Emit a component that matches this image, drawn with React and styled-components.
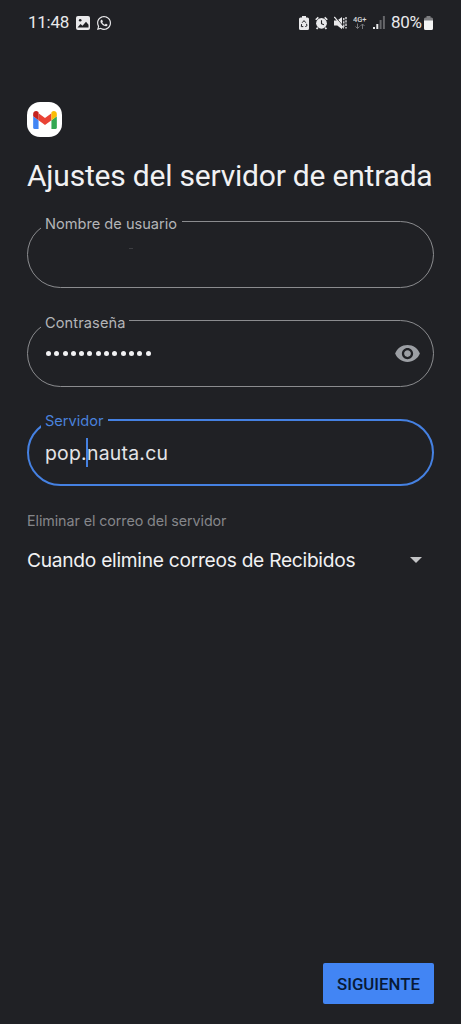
import React from 'react';
import styled, { createGlobalStyle } from 'styled-components';
import { FaWhatsapp } from 'react-icons/fa';
import { MdVisibility } from 'react-icons/md';

const GlobalStyle = createGlobalStyle`
  * {
    box-sizing: border-box;
  }
  body {
    margin: 0;
    background: #202125;
  }
`;

const Screen = styled.div`
  display: flex;
  flex-direction: column;
  width: 461px;
  height: 1024px;
  overflow: hidden;
  background: #202125;
  color: #f1f1f3;
  font-family: Roboto, sans-serif;
`;

const StatusBar = styled.header`
  display: flex;
  align-items: center;
  justify-content: space-between;
  height: 45px;
  padding: 0 28px;
  color: #e9e9eb;
`;

const StatusGroup = styled.div`
  display: flex;
  align-items: center;
  gap: ${({ $gap }) => $gap}px;
  svg {
    display: block;
    flex: none;
  }
`;

const Clock = styled.span`
  width: 42px;
  font-size: 17px;
  line-height: 20px;
  letter-spacing: -0.25px;
  white-space: nowrap;
  transform: translateY(-1px);
`;

const Percent = styled.span`
  width: 32px;
  font-size: 17px;
  line-height: 20px;
  letter-spacing: -0.35px;
  white-space: nowrap;
  transform: translateY(-1px);
`;

const Content = styled.main`
  display: flex;
  flex: 1;
  flex-direction: column;
  padding: 57px 27px 20px;
`;

const AppIcon = styled.div`
  display: flex;
  align-items: center;
  justify-content: center;
  width: 35px;
  height: 35px;
  border-radius: 13px;
  background: #fff;
`;

const Title = styled.h1`
  margin: 20px 0 26px;
  font-size: 30px;
  font-weight: 400;
  line-height: 38px;
  letter-spacing: -0.21px;
  white-space: nowrap;
`;

const Fields = styled.div`
  display: flex;
  flex-direction: column;
  gap: 32px;
`;

const Field = styled.div`
  position: relative;
  display: flex;
  align-items: center;
  justify-content: space-between;
  height: 67px;
  padding: 0 ${({ $active }) => ($active ? 11 : 12)}px 0 ${({ $active }) => ($active ? 16 : 17)}px;
  border: ${({ $active }) => ($active ? '2px solid #4581e2' : '1px solid #8b8c8f')};
  border-radius: 34px;
`;

const FieldLabel = styled.label`
  position: absolute;
  top: ${({ $active }) => ($active ? -9 : -7)}px;
  left: ${({ $active }) => ($active ? 12 : 13)}px;
  width: ${({ $width }) => $width}px;
  height: 18px;
  padding-left: 4px;
  background: #202125;
  color: ${({ $active }) => ($active ? '#4a82dc' : '#b4b5b8')};
  font-family: 'Google Sans', Inter, sans-serif;
  font-size: 14.6px;
  line-height: 18px;
  letter-spacing: ${({ $spacing }) => $spacing}px;
  white-space: nowrap;
`;

const Dots = styled.div`
  display: flex;
  gap: 3.3px;
  padding-left: 1px;
`;

const Dot = styled.i`
  width: 5px;
  height: 5px;
  border-radius: 50%;
  background: #f1f1f3;
`;

const Value = styled.span`
  display: flex;
  align-items: center;
  color: #e4e4e7;
  font-family: 'Google Sans', Inter, sans-serif;
  font-size: 19.4px;
  line-height: 26px;
  letter-spacing: 0.25px;
  white-space: nowrap;
`;

const Caret = styled.i`
  width: 2px;
  height: 29px;
  margin: 0 -1.5px 0 -0.5px;
  background: #4581e2;
`;

const Smudge = styled.i`
  width: 4px;
  height: 1px;
  margin: -13px 0 0 84px;
  background: #3d3e42;
`;

const SelectLabel = styled.p`
  margin: 26px 0 0;
  color: #85868a;
  font-family: 'Google Sans', Inter, sans-serif;
  font-size: 14.3px;
  line-height: 18px;
  letter-spacing: -0.08px;
`;

const Select = styled.div`
  display: flex;
  align-items: center;
  justify-content: space-between;
  height: 28px;
  margin-top: 16px;
  padding-right: 12px;
  font-family: 'Google Sans', Inter, sans-serif;
  font-size: 19.2px;
  letter-spacing: -0.28px;
  white-space: nowrap;
`;

const NextButton = styled.button`
  align-self: flex-end;
  width: 111px;
  height: 41px;
  margin-top: auto;
  padding: 1px 0 0;
  border: 0;
  border-radius: 2px;
  background: #4285f4;
  color: #081a36;
  font-family: Roboto, sans-serif;
  font-size: 16.8px;
  font-weight: 500;
`;

const ImageIcon = () => (
  <svg width="14" height="14" viewBox="0 0 14 14">
    <rect width="14" height="14" rx="2" fill="#e9e9eb" />
    <circle cx="4.2" cy="4.3" r="1.3" fill="#202125" />
    <path d="M1.5 11.5 4.5 8l2 1.8L10 5.8l2.5 3v2.7z" fill="#202125" />
  </svg>
);

const BatterySaverIcon = () => (
  <svg width="10" height="14" viewBox="0 0 10 14">
    <path d="M3 0h4v1.5h1.5A1.5 1.5 0 0 1 10 3v9.5A1.5 1.5 0 0 1 8.5 14h-7A1.5 1.5 0 0 1 0 12.5V3a1.5 1.5 0 0 1 1.5-1.5H3z" fill="#e9e9eb" />
    <path d="M3.2 6.7 5 4.6l1.8 2.1M7.5 7.8l.5 1.9-1.7.9M4.300 10.6H2.3l.3-2.5" fill="none" stroke="#202125" />
  </svg>
);

const AlarmIcon = () => (
  <svg width="13" height="14" viewBox="0 0 14 14">
    <circle cx="7" cy="7.3" r="5.8" fill="#e9e9eb" />
    <path d="M.8 3.5 3.6 1M13.2 3.5 10.4 1M3 12l-1.3 1.5M11 12l1.3 1.5" stroke="#e9e9eb" strokeWidth="1.8" />
    <path d="M7 4v3.7l2.6 1.2" fill="none" stroke="#202125" strokeWidth="1.2" />
  </svg>
);

const MuteIcon = () => (
  <svg width="13" height="14" viewBox="0 0 13 14">
    <path d="M0 4.5h3.3L8 1v12.2L3.3 9.5H0z" fill="#e9e9eb" />
    <path d="M1.2.8 10.6 11.8" stroke="#202125" />
    <path d="M.3 1 9.8 12.3" stroke="#e9e9eb" strokeWidth="1.2" />
    <path d="M9.8 2v9M12 1v11.5" stroke="#e9e9eb" strokeWidth="1.3" strokeDasharray="2.3 1" />
  </svg>
);

const NetworkIcon = () => (
  <svg width="14" height="15" viewBox="0 0 14 15">
    <text x="0" y="7" fill="#d9d9dc" fontFamily="Roboto, sans-serif" fontSize="7.5" fontWeight="500" textLength="13.5">4G+</text>
    <path d="M4.500 8.500v5M2.500 11.500l2 2 2-2M9.500 14V9M7.500 11l2-2 2 2" fill="none" stroke="#77787b" />
  </svg>
);

const SignalIcon = () => (
  <svg width="12" height="13" viewBox="0 0 12 13">
    <path d="M0 11h2v2H0zM3.3 8h2v5h-2z" fill="#e9e9eb" />
    <path d="M6.6 4h2v9h-2zM9.9 0h2v13h-2z" fill="#66676a" />
  </svg>
);

const BatteryIcon = () => (
  <svg width="9" height="14" viewBox="0 0 9 14">
    <path d="M2.5 0h4v1.5h-4zM0 3a1.5 1.5 0 0 1 1.5-1.5h6A1.5 1.5 0 0 1 9 3v2H0z" fill="#7d7e81" />
    <path d="M0 4.5h9v8A1.5 1.5 0 0 1 7.5 14h-6A1.5 1.5 0 0 1 0 12.5z" fill="#f4f4f4" />
  </svg>
);

const GmailLogo = () => (
  <svg width="24" height="18" viewBox="0 0 25 19">
    <path d="M0 5.5 5.7 9.8V19h-4A1.7 1.7 0 0 1 0 17.3z" fill="#4285f4" />
    <path d="M25 5.5 19.3 9.8V19h4a1.7 1.7 0 0 0 1.7-1.7z" fill="#34a853" />
    <path d="M5.7 2.3 12.5 7.4l6.8-5.1v7.5l-6.8 5.1-6.8-5.1z" fill="#ea4335" />
    <path d="M0 3.2C0 .3 3.2-.8 5.2.8l.5.4v8.6L0 5.5z" fill="#c5221f" />
    <path d="M25 3.2C25 .3 21.8-.8 19.8.8l-.5.4v8.6L25 5.5z" fill="#fbbc04" />
  </svg>
);

const TextField = ({ label, labelWidth, spacing = 0, active = false, children }) => (
  <Field $active={active}>
    <FieldLabel $active={active} $width={labelWidth} $spacing={spacing}>{label}</FieldLabel>
    {children}
  </Field>
);

const App = () => (
  <>
    <GlobalStyle />
    <Screen>
      <StatusBar>
        <StatusGroup $gap={6}>
          <Clock>11:48</Clock>
          <ImageIcon />
          <FaWhatsapp size={16} />
        </StatusGroup>
        <StatusGroup $gap={6}>
          <BatterySaverIcon />
          <AlarmIcon />
          <MuteIcon />
          <NetworkIcon />
          <SignalIcon />
          <StatusGroup $gap={1}>
            <Percent>80%</Percent>
            <BatteryIcon />
          </StatusGroup>
        </StatusGroup>
      </StatusBar>
      <Content>
        <AppIcon>
          <GmailLogo />
        </AppIcon>
        <Title>Ajustes del servidor de entrada</Title>
        <Fields>
          <TextField label="Nombre de usuario" labelWidth={141}>
            <Smudge />
          </TextField>
          <TextField label="Contraseña" labelWidth={88} spacing={0.1}>
            <Dots>
              {Array.from({ length: 13 }, (_, i) => (
                <Dot key={i} />
              ))}
            </Dots>
            <MdVisibility size={27} color="#9c9fa4" />
          </TextField>
          <TextField label="Servidor" labelWidth={67} active>
            <Value>
              pop.
              <Caret />
              nauta.cu
            </Value>
          </TextField>
        </Fields>
        <SelectLabel>Eliminar el correo del servidor</SelectLabel>
        <Select>
          Cuando elimine correos de Recibidos
          <svg width="12" height="6" viewBox="0 0 12 6">
            <path d="M0 0h12L6 6z" fill="#c3c4c6" />
          </svg>
        </Select>
        <NextButton>SIGUIENTE</NextButton>
      </Content>
    </Screen>
  </>
);

export default App;
